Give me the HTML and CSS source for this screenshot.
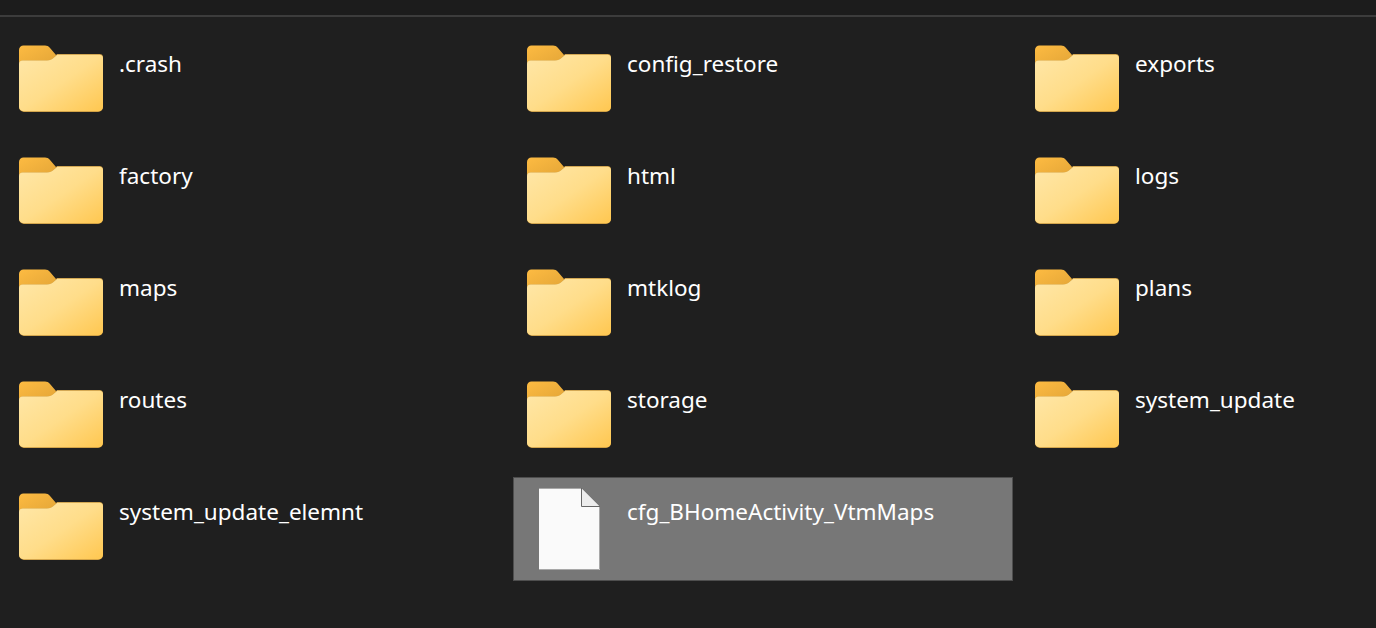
FILE: index.html
```html
<!DOCTYPE html>
<html lang="en">

<head>
    <meta charset="UTF-8" />
    <title>Files</title>
    <link rel="stylesheet" href="styles.css">
</head>

<body>
    <svg class="defs" width="0" height="0">
        <defs>
            <linearGradient id="folderFront" x1="0" y1="0" x2="1" y2="1">
                <stop offset="0" stop-color="#ffe7a8" />
                <stop offset="0.5" stop-color="#ffdd8a" />
                <stop offset="1" stop-color="#ffc750" />
            </linearGradient>
            <linearGradient id="folderBack" x1="0" y1="0" x2="1" y2="1">
                <stop offset="0" stop-color="#fdbb42" />
                <stop offset="1" stop-color="#e3a537" />
            </linearGradient>
            <symbol id="folder" viewBox="0 0 84 96">
                <path d="M0 17a4.500 4.500 0 0 1 4.500-4.500H26c2 0 3.500.7 4.800 2.200L37 22v10H0z" fill="url(#folderBack)" />
                <path d="M0 31a3.500 3.500 0 0 1 3.500-3.500H28c3 0 5-.8 6.500-2.400l3.500-4.100h42.500a3.500 3.500 0 0 1 3.500 3.500v49.500a5 5 0 0 1-5 5H5a5 5 0 0 1-5-5z" fill="#c4953e" />
                <path d="M0 31a3.500 3.500 0 0 1 3.500-3.500H28c3 0 5-.8 6.500-2.400l3.800-3.400h42.200a3.500 3.500 0 0 1 3.500 3.500v48.500a4.500 4.500 0 0 1-4.500 4.500h-75A4.500 4.500 0 0 1 0 73.500z" fill="url(#folderFront)" />
            </symbol>
            <symbol id="doc" viewBox="0 0 84 96">
                <path d="M12 7h42l19 19v63H12z" fill="#fafafa" />
                <path d="M12 7.500h42l18.500 18.500v62.500H12" fill="none" stroke="#a8a8a8" stroke-width="1" />
                <path d="M55 8l17 17H55z" fill="#ececec" />
                <path d="M54.500 7v18.500H73" fill="none" stroke="#666" stroke-width="1" />
            </symbol>
        </defs>
    </svg>

    <div class="topbar"></div>

    <div class="file-grid">
        <div class="item">
            <svg class="icon"><use href="#folder" /></svg>
            <span class="name">.crash</span>
        </div>
        <div class="item">
            <svg class="icon"><use href="#folder" /></svg>
            <span class="name">config_restore</span>
        </div>
        <div class="item">
            <svg class="icon"><use href="#folder" /></svg>
            <span class="name">exports</span>
        </div>
        <div class="item">
            <svg class="icon"><use href="#folder" /></svg>
            <span class="name">factory</span>
        </div>
        <div class="item">
            <svg class="icon"><use href="#folder" /></svg>
            <span class="name">html</span>
        </div>
        <div class="item">
            <svg class="icon"><use href="#folder" /></svg>
            <span class="name">logs</span>
        </div>
        <div class="item">
            <svg class="icon"><use href="#folder" /></svg>
            <span class="name">maps</span>
        </div>
        <div class="item">
            <svg class="icon"><use href="#folder" /></svg>
            <span class="name">mtklog</span>
        </div>
        <div class="item">
            <svg class="icon"><use href="#folder" /></svg>
            <span class="name">plans</span>
        </div>
        <div class="item">
            <svg class="icon"><use href="#folder" /></svg>
            <span class="name">routes</span>
        </div>
        <div class="item">
            <svg class="icon"><use href="#folder" /></svg>
            <span class="name">storage</span>
        </div>
        <div class="item">
            <svg class="icon"><use href="#folder" /></svg>
            <span class="name">system_update</span>
        </div>
        <div class="item">
            <svg class="icon"><use href="#folder" /></svg>
            <span class="name">system_update_elemnt</span>
        </div>
        <div class="item selected">
            <svg class="icon"><use href="#doc" /></svg>
            <span class="name">cfg_BHomeActivity_VtmMaps</span>
        </div>
    </div>
</body>

</html>
```

FILE: styles.css
```css
* {
    box-sizing: border-box;
}

body {
    margin: 0;
    height: 628px;
    overflow: hidden;
    background: #1f1f1f;
    color: #fff;
    font-family: "Noto Sans", "Open Sans", sans-serif;
}

.defs {
    display: block;
}

.topbar {
    height: 17px;
    border-bottom: 2px solid #3c3c3c;
    background: #1c1c1c;
}

.file-grid {
    display: grid;
    grid-template-columns: 500px 500px 1fr;
    grid-auto-rows: 104px;
    gap: 8px;
    padding: 12px 0 0 5px;
}

.item {
    display: flex;
    align-items: flex-start;
    gap: 16px;
    padding: 3px 0 0 13px;
    border: 1px solid transparent;
}

.item.selected {
    background: #777;
    border-color: #4e4e4e;
}

.icon {
    flex: none;
    width: 84px;
    height: 96px;
}

.name {
    margin-top: 16px;
    font-size: 22.5px;
    line-height: 30px;
    white-space: nowrap;
}
```
